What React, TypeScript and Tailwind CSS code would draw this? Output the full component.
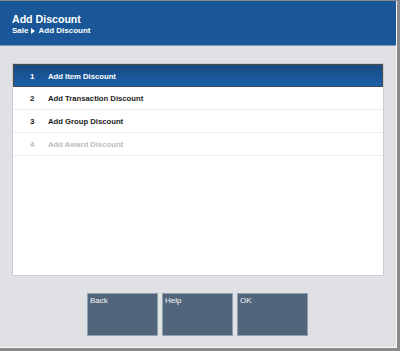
import React from "react";

const rows = [
  { n: "1", label: "Add Item Discount", state: "selected" },
  { n: "2", label: "Add Transaction Discount", state: "normal" },
  { n: "3", label: "Add Group Discount", state: "normal" },
  { n: "4", label: "Add Award Discount", state: "disabled" },
];

export default function App() {
  return (
    <div
      className="w-[400px] h-[351px] flex flex-col bg-[#8a8a8a] overflow-hidden"
      style={{ fontFamily: '"Liberation Sans", Arial, sans-serif' }}
    >
      <div className="flex flex-col flex-1 mt-px mr-[3px] mb-[3px] bg-[#dfe1e5] border-r border-b border-[#f4f5f6]">
        <div className="h-[45px] bg-[#1a5798] border-b border-[#7f97b8] flex flex-col pl-[12px] pt-[12px]">
          <div className="text-white font-bold text-[10.6px] leading-[12px]">Add Discount</div>
          <div className="text-white font-bold text-[8px] leading-[10px] flex items-center gap-[3px] mt-[1px]">
            <span>Sale</span>
            <svg width="4" height="6" viewBox="0 0 4 6">
              <path d="M0 0 L4 3 L0 6 Z" fill="white" />
            </svg>
            <span>Add Discount</span>
          </div>
        </div>
        <div className="flex-1 flex flex-col px-[12px] pt-[17px]">
          <div className="h-[213px] bg-white border border-[#c9ccd1] flex flex-col">
            {rows.map((r) => {
              const sel = r.state === "selected";
              return (
                <div
                  key={r.n}
                  className={
                    sel
                      ? "h-[23px] flex items-center pt-[2px] border border-[#4a4a4a] bg-gradient-to-b from-[#184a82] to-[#1a60aa] text-white"
                      : "h-[23px] flex items-center pt-[2px] border-b border-[#ececec] " +
                        (r.state === "disabled" ? "text-[#bdbdbd]" : "text-[#222]")
                  }
                >
                  <span className={sel ? "w-[34px] pl-[16px] text-[8px] font-bold" : "w-[35px] pl-[17px] text-[8px] font-bold"}>
                    {r.n}
                  </span>
                  <span className="text-[7.7px] font-bold">{r.label}</span>
                </div>
              );
            })}
          </div>
          <div className="flex justify-center gap-[4px] mt-[17px] ml-[-1px]">
            {["Back", "Help", "OK"].map((b) => (
              <div
                key={b}
                className="w-[71px] h-[43px] bg-[#52667b] border border-[#90a0b1] text-[#f2f4f6] text-[8px] leading-[10px] pl-[2px] pt-[2px]"
              >
                {b}
              </div>
            ))}
          </div>
        </div>
      </div>
    </div>
  );
}
